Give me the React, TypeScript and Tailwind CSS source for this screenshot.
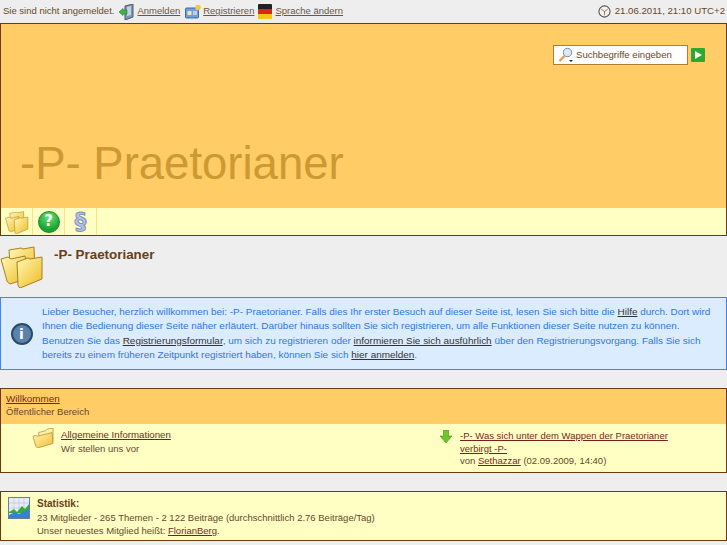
import type { ReactNode } from "react";

function FolderIcon({ className }: { className: string }) {
  return (
    <svg viewBox="0 0 24 22" className={className}>
      <defs>
        <linearGradient id="fold" x1="0" y1="0" x2="1" y2="1">
          <stop offset="0" stopColor="#fff7b8" />
          <stop offset="1" stopColor="#f0bd2c" />
        </linearGradient>
      </defs>
      <path d="M7 5l8-2 2-2 6-1 0 15-14 4z" fill="#fff2a8" stroke="#b08a30" strokeWidth="0.8" strokeLinejoin="round" />
      <path d="M1 9l3-1 2 1 16-4 1 12-17 5q-1-1-2-2z" fill="url(#fold)" stroke="#b08a30" strokeWidth="0.8" strokeLinejoin="round" />
    </svg>
  );
}

function FoldersIcon({ className }: { className: string }) {
  return (
    <svg viewBox="0 0 44 44" className={className}>
      <defs>
        <linearGradient id="folds" x1="0" y1="0" x2="1" y2="1">
          <stop offset="0" stopColor="#fff8b8" />
          <stop offset="1" stopColor="#f0ba20" />
        </linearGradient>
      </defs>
      <path d="M9 6l12-2 2 1 11-2 1 24-24 7z" fill="url(#folds)" stroke="#a57f25" strokeLinejoin="round" />
      <path d="M1 15l7-2 3 2 14-3 4 22-19 6q-2-1-3-3z" fill="url(#folds)" stroke="#a57f25" strokeLinejoin="round" />
      <path d="M17 18l11-4 2 1 12-2v22l-22 9q-2-1-2-3z" fill="url(#folds)" stroke="#a57f25" strokeLinejoin="round" />
    </svg>
  );
}

function LoginIcon() {
  return (
    <svg viewBox="0 0 16 16" className="h-4 w-4">
      <path d="M6 2l8-2v13l-8 3z" fill="#7f96b4" stroke="#4a5a70" />
      <path d="M8 3l4-1v9l-4 1z" fill="#c4d2e4" />
      <path d="M0 8l4-3.5V6h4v4H4v1.5z" fill="#3fb04a" stroke="#1f7a2a" strokeWidth="0.6" />
    </svg>
  );
}

function RegisterIcon() {
  return (
    <svg viewBox="0 0 16 16" className="h-4 w-4">
      <rect x="0.5" y="4" width="13" height="10" rx="1" fill="#6f9fe0" stroke="#3e6aa8" />
      <rect x="2.5" y="7" width="4" height="4" fill="#f4e2b8" />
      <path d="M8 8h4M8 10h4" stroke="#fff" />
      <circle cx="13" cy="3.5" r="2.8" fill="#f5c842" />
    </svg>
  );
}

function FlagIcon() {
  return (
    <div className="flex h-[15px] w-[14px] flex-col overflow-hidden rounded-[1px]">
      <div className="h-[5px] bg-[#222]" />
      <div className="h-[5px] bg-[#d8261c]" />
      <div className="h-[5px] bg-[#f5c518]" />
    </div>
  );
}

function ClockIcon() {
  return (
    <svg viewBox="0 0 14 14" className="h-[13px] w-[13px]">
      <circle cx="7" cy="7" r="6" fill="#f4f4f4" stroke="#555" strokeWidth="1.2" />
      <path d="M7 7L3.5 4.5M7 7l3.5-2.5M7 7v4" stroke="#a33" strokeWidth="0.8" />
    </svg>
  );
}

function SearchIcon() {
  return (
    <svg viewBox="0 0 16 16" className="h-4 w-4">
      <path d="M1.5 14l5-5" stroke="#e0a050" strokeWidth="2.4" />
      <circle cx="9.5" cy="5.5" r="4.2" fill="#dde8f4" stroke="#7a8ca0" />
      <path d="M11 13h4l-2 2z" fill="#222" />
    </svg>
  );
}

function GoIcon() {
  return (
    <div className="flex h-[14px] w-[14px] items-center justify-center rounded-[1px] bg-[#2fa82f]">
      <svg viewBox="0 0 8 8" className="h-2 w-2">
        <path d="M1 0l7 4-7 4z" fill="#fff" />
      </svg>
    </div>
  );
}

function HelpIcon() {
  return (
    <div className="flex h-[22px] w-[22px] items-center justify-center rounded-full border border-[#1a8a2a] bg-[radial-gradient(circle_at_50%_25%,#6fe07a,#16a52e_70%)] font-['DejaVu_Sans',sans-serif] text-[15px] font-bold leading-none text-white">
      ?
    </div>
  );
}

function RulesIcon() {
  return (
    <div className="font-['DejaVu_Sans',sans-serif] text-[23px] font-bold leading-none text-[#b4c4e6] [-webkit-text-stroke:1px_#7f8fb8]">§</div>
  );
}

function InfoIcon() {
  return (
    <div className="flex h-[22px] w-[22px] items-center justify-center rounded-full border-2 border-[#2a4a6c] bg-[#5b82a8] font-['DejaVu_Sans',sans-serif] text-[14px] font-bold leading-none text-white">
      i
    </div>
  );
}

function ArrowIcon() {
  return (
    <svg viewBox="0 0 12 13" className="h-[13px] w-3">
      <path d="M3.5 0h5v6H12l-6 7-6-7h3.5z" fill="#6cc52c" stroke="#3f8f1a" strokeWidth="0.6" />
    </svg>
  );
}

function ChartIcon() {
  return (
    <svg viewBox="0 0 22 22" className="h-[22px] w-[22px]">
      <rect x="0.5" y="0.5" width="21" height="21" fill="#e8edf5" stroke="#6c7f99" />
      <path d="M6 1v20M11 1v20M16 1v20M1 6h20M1 11h20M1 16h20" stroke="#b4c0d2" strokeWidth="0.6" />
      <path d="M1 15l5-3 3 3 5-6 3 3 4-5v9H1z" fill="#2fae3a" />
      <path d="M1 18l6-3 4 2 10-5v9H1z" fill="#3a7fd0" />
    </svg>
  );
}

function NavCell({ children }: { children: ReactNode }) {
  return (
    <div className="flex h-full w-8 items-center justify-center border-r border-[#ffe08a]">{children}</div>
  );
}

function TopLink({ children }: { children: ReactNode }) {
  return <a className="text-[#7a5230] underline">{children}</a>;
}

function DarkLink({ children }: { children: ReactNode }) {
  return <a className="text-[#333] underline">{children}</a>;
}

export default function App() {
  return (
    <div className="h-[545px] w-[727px] overflow-hidden bg-[#eeeeee] font-['Liberation_Sans',sans-serif] text-[9.5px] text-[#66482a]">
      <div className="flex h-[23px] items-center justify-between pl-[3px] pr-[2px]">
        <div className="flex items-center">
          <span>Sie sind nicht angemeldet.</span>
          <span className="ml-[5px] mr-[2px] flex"><LoginIcon /></span>
          <TopLink>Anmelden</TopLink>
          <span className="ml-[5px] mr-[2px] flex"><RegisterIcon /></span>
          <TopLink>Registrieren</TopLink>
          <span className="ml-[4px] mr-[3px] flex"><FlagIcon /></span>
          <TopLink>Sprache ändern</TopLink>
        </div>
        <div className="flex items-center gap-[4px] text-[9.65px]">
          <ClockIcon />
          <span>21.06.2011, 21:10 UTC+2</span>
        </div>
      </div>

      <div className="border border-[#6b3a10] bg-[#ffcc66]">
        <div className="flex h-[184px] flex-col justify-between">
          <div className="flex items-center justify-end gap-[3px] pr-[21px] pt-[21px]">
            <div className="flex h-5 w-[135px] items-center gap-[2px] border border-[#b87a30] bg-white pl-1 text-[9.6px] text-[#66482a]">
              <SearchIcon />
              <span>Suchbegriffe eingeben</span>
            </div>
            <GoIcon />
          </div>
          <div className="pb-[22px] pl-[19px] text-[45.5px] leading-none text-[#cc9933]">
            -P- Praetorianer
          </div>
        </div>
        <div className="flex h-[27px] items-center bg-[#ffffc4]">
          <NavCell><FoldersIcon className="h-[24px] w-[24px]" /></NavCell>
          <NavCell><HelpIcon /></NavCell>
          <NavCell><RulesIcon /></NavCell>
        </div>
      </div>

      <div className="flex h-[61px] items-start">
        <FoldersIcon className="mt-[8px] h-[44px] w-[44px]" />
        <h1 className="ml-[10px] mt-[9px] text-[13.4px] font-bold text-[#66401a]">-P- Praetorianer</h1>
      </div>

      <div className="flex h-[73px] items-center border border-[#3d85f0] bg-[#dcecff] text-[9.95px] text-[#2a78e8]">
        <div className="flex w-[41px] justify-center"><InfoIcon /></div>
        <p className="w-[675px] leading-[14.5px]">
          Lieber Besucher, herzlich willkommen bei: -P- Praetorianer. Falls dies Ihr erster Besuch auf dieser Seite ist, lesen Sie sich bitte die <DarkLink>Hilfe</DarkLink> durch. Dort wird Ihnen die Bedienung dieser Seite näher erläutert. Darüber hinaus sollten Sie sich registrieren, um alle Funktionen dieser Seite nutzen zu können. Benutzen Sie das <DarkLink>Registrierungsformular</DarkLink>, um sich zu registrieren oder <DarkLink>informieren Sie sich ausführlich</DarkLink> über den Registrierungsvorgang. Falls Sie sich bereits zu einem früheren Zeitpunkt registriert haben, können Sie sich <DarkLink>hier anmelden</DarkLink>.
        </p>
      </div>

      <div className="mt-[18px] border border-[#6b3a10] bg-[#ffffc4]">
        <div className="h-[35px] bg-[#ffcc66] pl-[5px] pt-[4px]">
          <a className="block text-[9.9px] leading-[12px] text-[#7a1f1f] underline">Willkommen</a>
          <div className="mt-px leading-[12px]">Öffentlicher Bereich</div>
        </div>
        <div className="flex h-[48px]">
          <div className="flex w-[430px] pl-[31px] pt-[4px]">
            <FolderIcon className="h-5 w-[22px]" />
            <div className="ml-[7px]">
              <a className="block text-[9.7px] leading-[14px] text-[#7a1f1f] underline">Allgemeine Informationen</a>
              <div className="leading-[14px]">Wir stellen uns vor</div>
            </div>
          </div>
          <div className="flex pl-[9px] pt-[6px]">
            <ArrowIcon />
            <div className="ml-[8px] w-[230px] leading-[12.5px]">
              <a className="text-[#7a1f1f] underline">-P- Was sich unter dem Wappen der Praetorianer verbirgt -P-</a>
              <div>von <a className="text-[#7a1f1f] underline">Sethazzar</a> (02.09.2009, 14:40)</div>
            </div>
          </div>
        </div>
      </div>

      <div className="mt-[18px] flex h-[50px] border border-[#6b3a10] bg-[#ffffc4] pl-[7px] pt-[5px]">
        <ChartIcon />
        <div className="ml-[7px]">
          <div className="text-[10px] font-bold leading-[14px] text-[#66401a]">Statistik:</div>
          <div className="leading-[13px]">23 Mitglieder - 265 Themen - 2 122 Beiträge (durchschnittlich 2.76 Beiträge/Tag)</div>
          <div className="leading-[13px]">Unser neuestes Mitglied heißt: <a className="text-[#7a1f1f] underline">FlorianBerg</a>.</div>
        </div>
      </div>
    </div>
  );
}
